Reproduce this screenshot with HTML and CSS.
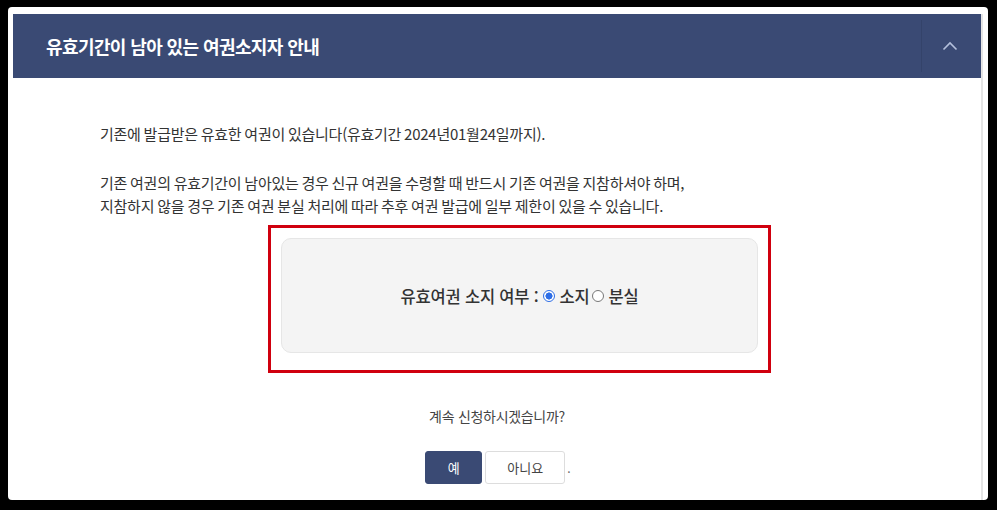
FILE: index.html
```html
<!DOCTYPE html>
<html lang="ko">
<head>
<meta charset="utf-8">
<link rel="stylesheet" href="styles.css">
</head>
<body>
<div class="frame">
  <div class="panel">
    <div class="head">
      <h2 class="title">유효기간이 남아 있는 여권소지자 안내</h2>
      <div class="toggle">
        <svg width="16" height="10" viewBox="0 0 16 10"><path d="M1.5 8.5 L8 2 L14.5 8.5" fill="none" stroke="#b4c0dc" stroke-width="1.6"/></svg>
      </div>
    </div>
    <div class="body">
      <p class="para">기존에 발급받은 유효한 여권이 있습니다(유효기간 2024년01월24일까지).</p>
      <p class="para">기존 여권의 유효기간이 남아있는 경우 신규 여권을 수령할 때 반드시 기존 여권을 지참하셔야 하며,<br>지참하지 않을 경우 기존 여권 분실 처리에 따라 추후 여권 발급에 일부 제한이 있을 수 있습니다.</p>
      <div class="highlight">
        <div class="choice">
          <span>유효여권 소지 여부 :</span>
          <label class="opt"><span class="radio on"></span>소지</label>
          <label class="opt"><span class="radio"></span>분실</label>
        </div>
      </div>
      <p class="ask">계속 신청하시겠습니까?</p>
      <div class="btns">
        <button class="btn primary">예</button>
        <button class="btn">아니요</button>
        <span class="dot">.</span>
      </div>
    </div>
  </div>
</div>
</body>
</html>
```
FILE: styles.css
```css
html, body {
  margin: 0;
  padding: 0;
  background: #000;
  height: 510px;
  overflow: hidden;
}
body {
  font-family: "Noto Sans CJK KR", "Noto Sans", sans-serif;
  color: #333;
}
.frame {
  margin: 7px 9px 0 8px;
  height: 493px;
  background: #fff;
  border-radius: 4px;
  padding: 7px 7px 0 5px;
  box-sizing: border-box;
}
.panel {
  height: 100%;
  border-right: 2px solid #e4e4e4;
  box-sizing: border-box;
  margin-right: -2px;
}
.head {
  height: 64px;
  background: #3a4a74;
  display: flex;
  align-items: stretch;
}
.title {
  flex: 1;
  margin: 0;
  padding-left: 33px;
  display: flex;
  align-items: center;
  color: #fff;
  font-size: 18px;
  font-weight: 700;
  letter-spacing: -0.6px;
}
.toggle {
  width: 55px;
  padding-right: 4px;
  border-left: 1px solid #34436a;
  margin: 6px 0;
  display: flex;
  align-items: center;
  justify-content: center;
}
.body {
  padding: 44px 0 0 87px;
}
.para {
  margin: 0 0 26px;
  font-size: 15px;
  line-height: 23px;
  letter-spacing: -0.25px;
  word-spacing: -1px;
  color: #333;
}
.para + .para {
  margin-bottom: 8px;
}
.highlight {
  margin-left: 168px;
  width: 503px;
  height: 148px;
  border: 3px solid #d0000e;
  box-sizing: border-box;
  padding: 10px;
}
.choice {
  height: 115px;
  background: #f4f4f4;
  border: 1px solid #e6e6e6;
  border-radius: 10px;
  box-sizing: border-box;
  display: flex;
  align-items: center;
  justify-content: center;
  gap: 5px;
  font-size: 16.5px;
  font-weight: 500;
  letter-spacing: -0.2px;
  color: #333;
}
.opt {
  display: inline-flex;
  align-items: center;
  gap: 4px;
}
.opt + .opt {
  margin-left: -2px;
}
.radio {
  width: 12px;
  height: 12px;
  border-radius: 50%;
  border: 1px solid #777;
  box-sizing: border-box;
  background: #fff;
}
.radio.on {
  border: 1px solid #2e6ee6;
  background: radial-gradient(circle, #2e6ee6 0 3.3px, #fff 3.8px);
}
.ask {
  margin: 33px 0 0 -87px;
  text-align: center;
  font-size: 14px;
  color: #444;
  letter-spacing: -0.3px;
}
.btns {
  margin: 25px 0 0 -87px;
  display: flex;
  justify-content: center;
  align-items: center;
  gap: 3px;
  padding-left: 2px;
}
.btn {
  height: 33px;
  font-family: inherit;
  font-size: 13px;
  border-radius: 3px;
  border: 1px solid #ddd;
  background: #fff;
  color: #444;
  width: 80px;
  padding: 0;
}
.btn.primary {
  width: 57px;
  background: #3a4a74;
  border-color: #3a4a74;
  color: #fff;
}
.dot {
  font-size: 12px;
  color: #666;
  margin-left: -1px;
  align-self: flex-end;
  margin-bottom: 8px;
}
```
